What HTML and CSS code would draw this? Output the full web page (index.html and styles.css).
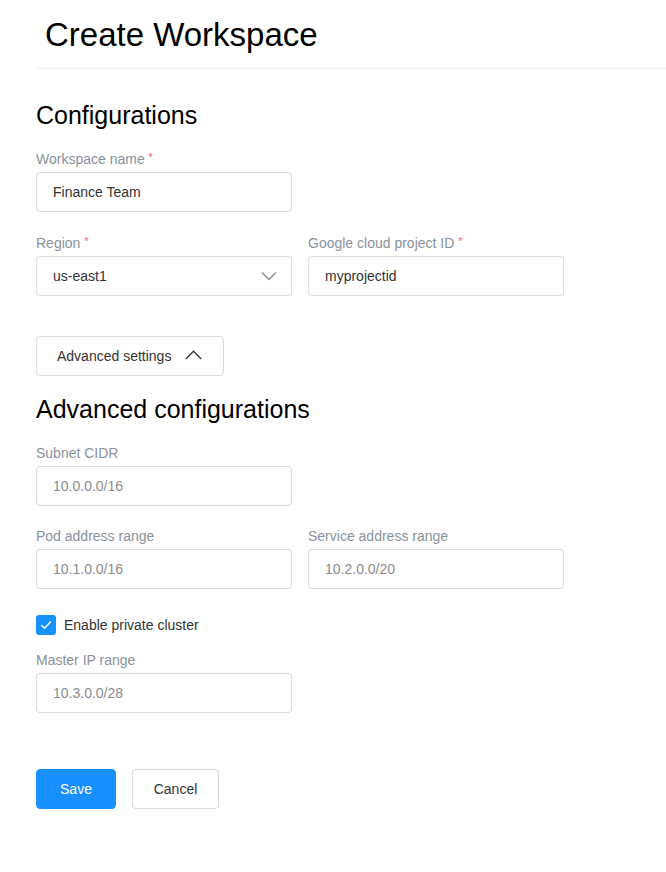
FILE: index.html
```html
<!DOCTYPE html>
<html lang="en">
<head>
<meta charset="utf-8">
<title>Create Workspace</title>
<link rel="stylesheet" href="styles.css">
</head>
<body>
<div class="page">
  <header class="header">
    <h1 class="title">Create Workspace</h1>
  </header>

  <h2 class="section-title first">Configurations</h2>

  <div class="row">
    <div class="field">
      <label class="label">Workspace name <span class="req">*</span></label>
      <div class="input">Finance Team</div>
    </div>
  </div>

  <div class="row">
    <div class="field">
      <label class="label">Region <span class="req">*</span></label>
      <div class="input select">
        <span>us-east1</span>
        <svg class="chev-down" width="16" height="10" viewBox="0 0 16 10"><path d="M1 1.5 L8 8.5 L15 1.5" fill="none" stroke="#8c8c8c" stroke-width="1.4"/></svg>
      </div>
    </div>
    <div class="field">
      <label class="label">Google cloud project ID <span class="req">*</span></label>
      <div class="input">myprojectid</div>
    </div>
  </div>

  <button class="btn adv-btn" type="button">
    <span>Advanced settings</span>
    <svg class="chev-up" width="17" height="10" viewBox="0 0 17 10"><path d="M0.8 9 L8.5 1.2 L16.2 9" fill="none" stroke="#333" stroke-width="1.3"/></svg>
  </button>

  <h2 class="section-title second">Advanced configurations</h2>

  <div class="row tight">
    <div class="field">
      <label class="label">Subnet CIDR</label>
      <div class="input disabled">10.0.0.0/16</div>
    </div>
  </div>

  <div class="row">
    <div class="field">
      <label class="label">Pod address range</label>
      <div class="input disabled">10.1.0.0/16</div>
    </div>
    <div class="field">
      <label class="label">Service address range</label>
      <div class="input disabled">10.2.0.0/20</div>
    </div>
  </div>

  <div class="check-row">
    <span class="checkbox">
      <svg width="12" height="10" viewBox="0 0 12 10"><path d="M1.2 5 L4.6 8.3 L10.8 1.5" fill="none" stroke="#fff" stroke-width="1.4"/></svg>
    </span>
    <span class="check-label">Enable private cluster</span>
  </div>

  <div class="row master">
    <div class="field">
      <label class="label">Master IP range</label>
      <div class="input disabled">10.3.0.0/28</div>
    </div>
  </div>

  <div class="actions">
    <button class="btn primary" type="button">Save</button>
    <button class="btn" type="button">Cancel</button>
  </div>
</div>
</body>
</html>
```

FILE: styles.css
```css
* { box-sizing: border-box; }

body {
  margin: 0;
  background: #fff;
  font-family: "Liberation Sans", Arial, sans-serif;
  color: #333;
}

.page {
  padding-left: 36px;
  display: flex;
  flex-direction: column;
  align-items: flex-start;
}

.header {
  align-self: stretch;
  padding-top: 15px;
  padding-bottom: 13px;
  border-bottom: 1px solid #f0f0f0;
}

.title {
  margin: 0 0 0 9px;
  font-size: 33px;
  line-height: 40px;
  font-weight: 400;
  color: #000;
}

.section-title {
  margin: 0;
  font-size: 25px;
  line-height: 32px;
  font-weight: 400;
  color: #000;
}

.section-title.first {
  margin-top: 30px;
  margin-bottom: 18px;
}

.section-title.second {
  margin-top: 17px;
  margin-bottom: 18px;
}

.row {
  display: flex;
  gap: 16px;
  margin-bottom: 21px;
}

.row.tight {
  margin-bottom: 20px;
}

.field {
  width: 256px;
  display: flex;
  flex-direction: column;
}

.label {
  font-size: 14px;
  line-height: 20px;
  color: #8a929b;
  margin-bottom: 3px;
}

.req {
  color: #ff5f5f;
  font-size: 11px;
  vertical-align: 3px;
  line-height: 1;
}

.input {
  height: 40px;
  border: 1px solid #d9d9d9;
  border-radius: 4px;
  padding: 0 16px;
  display: flex;
  align-items: center;
  font-size: 14px;
  color: #333;
  background: #fff;
}

.input.disabled {
  color: #8c8c8c;
}

.select {
  justify-content: space-between;
  padding-right: 14px;
}

.btn {
  height: 40px;
  border: 1px solid #d9d9d9;
  border-radius: 4px;
  background: #fff;
  font-family: "Liberation Sans", Arial, sans-serif;
  font-size: 14px;
  color: #333;
  padding: 0 21px;
  cursor: pointer;
}

.adv-btn {
  margin-top: 19px;
  width: 188px;
  display: flex;
  align-items: center;
  gap: 14px;
  padding: 0 20px;
}

.chev-up {
  margin-top: -2px;
}

.check-row {
  align-self: stretch;
  display: flex;
  align-items: center;
  gap: 8px;
  margin-top: 5px;
  margin-bottom: 15px;
}

.checkbox {
  width: 20px;
  height: 20px;
  border-radius: 3px;
  background: #1890ff;
  display: flex;
  align-items: center;
  justify-content: center;
}

.check-label {
  font-size: 14px;
  line-height: 20px;
  color: #333;
}

.row.master {
  margin-bottom: 0;
}

.actions {
  margin-top: 56px;
  display: flex;
  gap: 16px;
}

.btn.primary {
  background: #1890ff;
  border-color: #1890ff;
  color: #fff;
  width: 80px;
  padding: 0;
}

.actions .btn:not(.primary) {
  width: 87px;
  padding: 0;
}
```
